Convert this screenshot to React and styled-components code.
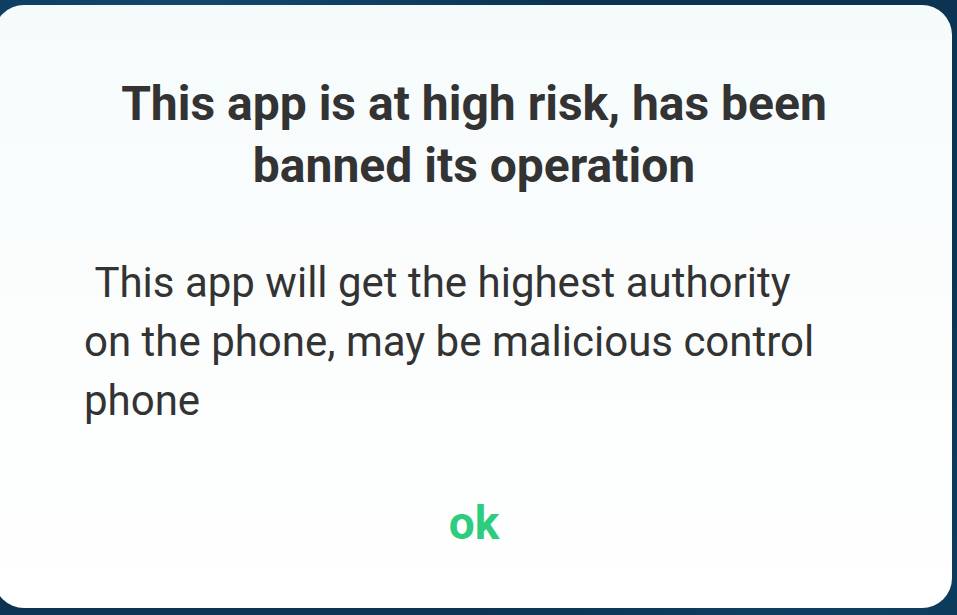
import React from "react";
import styled, { createGlobalStyle } from "styled-components";

const Global = createGlobalStyle`
  html, body { margin: 0; padding: 0; }
  body {
    width: 957px;
    height: 615px;
    overflow: hidden;
    font-family: Roboto, "Noto Sans", Arial, sans-serif;
  }
`;

const Screen = styled.div`
  width: 957px;
  height: 615px;
  box-sizing: border-box;
  padding: 5px 5px 7px 0;
  background:
    radial-gradient(circle at 20% 10%, #124a72 0%, transparent 40%),
    radial-gradient(circle at 85% 95%, #0e4063 0%, transparent 35%),
    #0b3452;
  display: flex;
`;

const Dialog = styled.div`
  flex: 1;
  margin-left: -6px;
  border-radius: 30px;
  background: linear-gradient(180deg, #f5fbfb 0%, #fbfdfd 45%, #ffffff 100%);
  display: flex;
  flex-direction: column;
  align-items: stretch;
  padding: 68px 88px 0 90px;
`;

const Title = styled.h1`
  margin: 0;
  font-family: Roboto, "Noto Sans", sans-serif;
  font-weight: 700;
  font-size: 48px;
  line-height: 62px;
  color: #333333;
  text-align: center;
`;

const Message = styled.p`
  margin: 56px 0 0;
  font-family: Roboto, "Noto Sans", sans-serif;
  font-weight: 400;
  font-size: 42px;
  line-height: 59px;
  color: #333333;
  text-align: left;
  white-space: pre-wrap;
`;

const Actions = styled.div`
  display: flex;
  justify-content: center;
  margin-top: 68px;
`;

const OkButton = styled.button`
  border: none;
  background: transparent;
  padding: 0;
  font-family: Roboto, "Noto Sans", sans-serif;
  font-weight: 700;
  font-size: 46px;
  line-height: 50px;
  color: #2ecc7e;
  cursor: pointer;
`;

export default function App() {
  return (
    <>
      <Global />
      <Screen>
        <Dialog>
          <Title>
            This app is at high risk, has been
            <br />
            banned its operation
          </Title>
          <Message>
            {" This app will get the highest authority\non the phone, may be malicious control\nphone"}
          </Message>
          <Actions>
            <OkButton>ok</OkButton>
          </Actions>
        </Dialog>
      </Screen>
    </>
  );
}
